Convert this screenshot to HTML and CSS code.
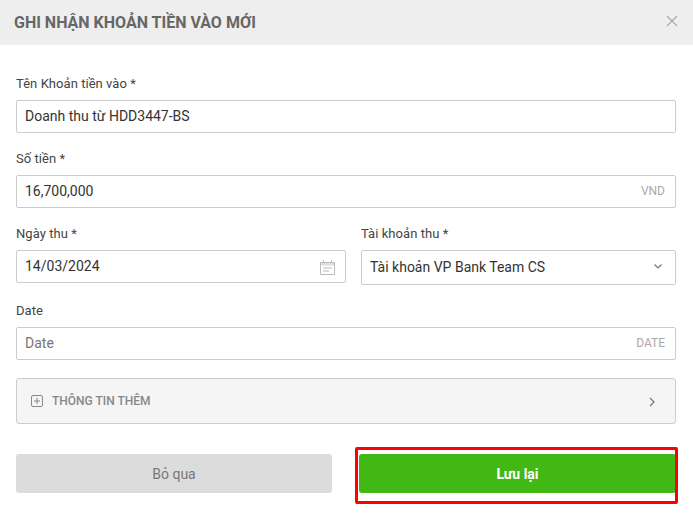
FILE: index.html
```html
<!DOCTYPE html>
<html lang="vi">
<head>
    <meta charset="UTF-8">
    <meta name="viewport" content="width=device-width, initial-scale=1.0">
    <title>Ghi nhận khoản tiền vào mới</title>
    <link rel="stylesheet" href="styles.css">
</head>
<body>
    <div class="modal-header">
        <h1>GHI NHẬN KHOẢN TIỀN VÀO MỚI</h1>
        <svg class="close-icon" width="12" height="12" viewBox="0 0 12 12"><path d="M1 1l10 10M11 1L1 11"/></svg>
    </div>

    <form class="modal-body">
        <div class="field name-field">
            <label>Tên Khoản tiền vào *</label>
            <div class="input">Doanh thu từ HDD3447-BS</div>
        </div>
        <div class="field money-field">
            <label>Số tiền *</label>
            <div class="input">16,700,000<span class="unit">VND</span></div>
        </div>
        <div class="row">
            <div class="field date-field">
                <label>Ngày thu *</label>
                <div class="input">14/03/2024
                    <svg class="cal-icon" width="15" height="15" viewBox="0 0 15 15">
                        <path d="M.5 2.500h14v12H.5zM3.500 0v3M11.500 0v3"/>
                        <path class="cal-band" d="M1 3h13v2.500H1z"/>
                        <path d="M3 8h9M3 11h6"/>
                    </svg>
                </div>
            </div>
            <div class="field account-field">
                <label>Tài khoản thu *</label>
                <div class="input select">Tài khoản VP Bank Team CS
                    <svg class="chev-icon" width="8" height="5" viewBox="0 0 8 5"><path d="M.5.5L4 4 7.500.5"/></svg>
                </div>
            </div>
        </div>
        <div class="field extra-date">
            <label>Date</label>
            <div class="input placeholder">Date<span class="unit">DATE</span></div>
        </div>
        <div class="more-info">
            <svg class="plus-icon" width="12" height="12" viewBox="0 0 12 12">
                <rect x=".5" y=".5" width="11" height="11" rx="1.500"/>
                <path d="M3 6h6M6 3v6"/>
            </svg>
            <span>THÔNG TIN THÊM</span>
            <svg class="more-chev" width="6" height="10" viewBox="0 0 6 10"><path d="M1 1l4 4-4 4"/></svg>
        </div>
        <div class="actions">
            <button type="button" class="btn btn-cancel">Bỏ qua</button>
            <div class="save-wrap">
                <button type="button" class="btn btn-save">Lưu lại</button>
                <div class="highlight"></div>
            </div>
        </div>
    </form>
</body>
</html>
```

FILE: styles.css
```css
body {
    margin: 0;
    font-family: Roboto, "Liberation Sans", sans-serif;
    font-size: 14px;
    color: #333;
    background-color: #fff;
}
.modal-header {
    height: 45px;
    padding: 0 15px 0 14px;
    display: flex;
    align-items: center;
    justify-content: space-between;
    background-color: #eee;
}
.modal-header h1 {
    margin: 0;
    font-size: 16px;
    font-weight: 700;
    color: #666;
}
.close-icon {
    margin-bottom: 4px;
}
.close-icon path {
    fill: none;
    stroke: #aaa;
    stroke-width: 1.3;
}
.modal-body {
    padding: 30px 17px 26px 16px;
}
.field label {
    display: block;
    height: 25px;
    font-size: 13px;
    line-height: 18px;
    letter-spacing: .05px;
    color: #444;
}
.input {
    height: 33px;
    box-sizing: border-box;
    padding: 0 10px 2px 8px;
    display: flex;
    align-items: center;
    justify-content: space-between;
    border: 1px solid #ccc;
    border-radius: 2px;
    font-size: 14px;
    color: #333;
}
.money-field {
    margin-top: 17px;
}
.row {
    margin-top: 17px;
    display: flex;
    gap: 15px;
}
.date-field {
    width: 330px;
}
.account-field {
    width: 315px;
}
.select {
    height: 35px;
}
.extra-date {
    margin-top: 17px;
}
.unit {
    font-size: 12px;
    color: #aaa;
}
.placeholder {
    color: #777;
}
.cal-icon {
    margin-top: 4px;
}
.cal-icon path {
    fill: none;
    stroke: #bbb;
}
.cal-icon .cal-band {
    fill: #ddd;
    stroke: none;
}
.chev-icon {
    margin-right: 3px;
}
.chev-icon path,
.more-chev path {
    fill: none;
    stroke: #777;
    stroke-width: 1.2;
}
.more-info {
    margin-top: 18px;
    height: 46px;
    box-sizing: border-box;
    padding: 0 20px 0 14px;
    display: flex;
    align-items: center;
    border: 1px solid #ccc;
    border-radius: 3px;
    background-color: #f5f5f5;
    font-size: 12px;
    font-weight: 500;
    color: #888;
}
.more-info span {
    margin-left: 9px;
    flex: 1;
}
.plus-icon rect,
.plus-icon path {
    fill: none;
    stroke: #888;
}
.more-chev {
    margin-top: 2px;
}
.actions {
    margin-top: 30px;
    display: flex;
    gap: 27px;
}
.btn {
    height: 39px;
    width: 316px;
    padding: 0;
    border: none;
    border-radius: 3px;
    font-family: inherit;
    font-size: 14px;
}
.btn-cancel {
    background-color: #dcdcdc;
    color: #777;
}
.save-wrap {
    position: relative;
}
.btn-save {
    display: block;
    width: 317px;
    background-color: #41b814;
    color: #fff;
    font-weight: 700;
}
.highlight {
    position: absolute;
    top: -7px;
    left: -4px;
    right: -2px;
    bottom: -11px;
    border: 3px solid #f00;
    border-radius: 2px;
}
```
